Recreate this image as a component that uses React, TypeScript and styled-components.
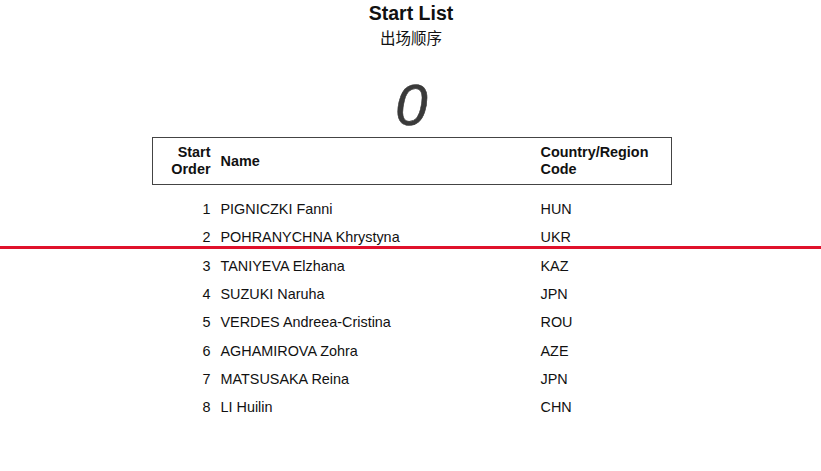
import React from "react";
import styled, { createGlobalStyle } from "styled-components";

const Global = createGlobalStyle`
  html, body { margin: 0; padding: 0; background: #fff; }
  body { font-family: "Liberation Sans", Arial, sans-serif; color: #111; }
`;

const Page = styled.div`
  position: relative;
  width: 821px;
  height: 471px;
  overflow: hidden;
  display: flex;
  flex-direction: column;
  align-items: center;
`;

const Title = styled.h1`
  margin: 2px 0 0;
  font-size: 19.5px;
  line-height: 22px;
  font-weight: 700;
  color: #111;
  padding-left: 1px;
`;

const Subtitle = styled.div`
  margin-top: 4px;
  font-family: "Noto Sans CJK SC", "Liberation Sans", sans-serif;
  font-size: 15.5px;
  line-height: 18px;
  color: #111;
  padding-left: 1px;
`;

const BigNumber = styled.div`
  margin-top: 29px;
  font-size: 58px;
  line-height: 60px;
  height: 60px;
  font-style: italic;
  -webkit-text-stroke: 0.6px #3a3a3a;
  color: #3a3a3a;
  padding-left: 2px;
`;

const Table = styled.div`
  margin-top: 2px;
  width: 520px;
  margin-left: 2px;
`;

const HeaderRow = styled.div`
  display: grid;
  grid-template-columns: 62px 1fr 130px;
  align-items: center;
  height: 46px;
  border: 1px solid #444;
  box-sizing: content-box;
  font-weight: 700;
  font-size: 14.4px;
  line-height: 17px;
  color: #111;
`;

const Body = styled.div`
  padding-top: 10px;
`;

const Row = styled.div`
  display: grid;
  grid-template-columns: 63px 1fr 131px;
  align-items: center;
  height: 28.3px;
  font-size: 14.4px;
  color: #111;
`;

const NumCell = styled.div`
  text-align: right;
  padding-right: 4px;
`;

const NameCell = styled.div`
  padding-left: 6px;
`;

const CodeCell = styled.div``;

const RedLine = styled.div`
  position: absolute;
  left: 0;
  right: 0;
  top: 246px;
  height: 3px;
  background: #e0112b;
`;

const rows = [
  ["1", "PIGNICZKI Fanni", "HUN"],
  ["2", "POHRANYCHNA Khrystyna", "UKR"],
  ["3", "TANIYEVA Elzhana", "KAZ"],
  ["4", "SUZUKI Naruha", "JPN"],
  ["5", "VERDES Andreea-Cristina", "ROU"],
  ["6", "AGHAMIROVA Zohra", "AZE"],
  ["7", "MATSUSAKA Reina", "JPN"],
  ["8", "LI Huilin", "CHN"],
];

export default function App() {
  return (
    <>
      <Global />
      <Page>
        <Title>Start List</Title>
        <Subtitle>出场顺序</Subtitle>
        <BigNumber>0</BigNumber>
        <Table>
          <HeaderRow>
            <NumCell>
              Start
              <br />
              Order
            </NumCell>
            <NameCell>Name</NameCell>
            <CodeCell>
              Country/Region
              <br />
              Code
            </CodeCell>
          </HeaderRow>
          <Body>
            {rows.map(([n, name, code]) => (
              <Row key={n}>
                <NumCell>{n}</NumCell>
                <NameCell>{name}</NameCell>
                <CodeCell>{code}</CodeCell>
              </Row>
            ))}
          </Body>
        </Table>
        <RedLine />
      </Page>
    </>
  );
}
